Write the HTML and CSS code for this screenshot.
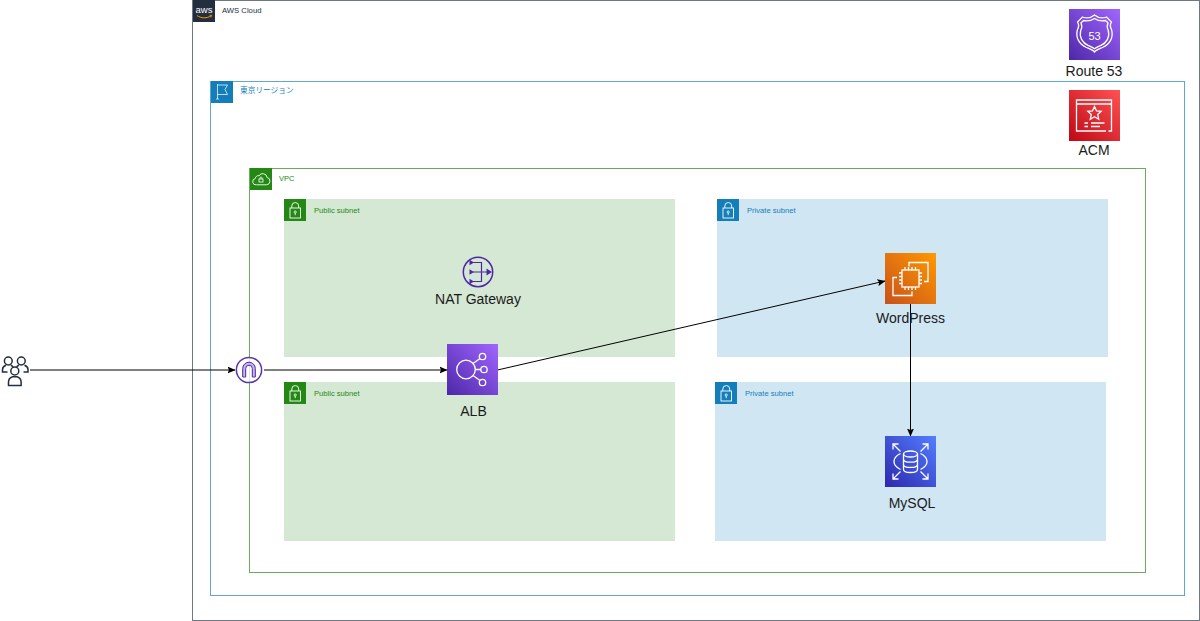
FILE: index.html
```html
<!DOCTYPE html>
<html lang="ja">
<head>
<meta charset="utf-8">
<title>AWS architecture</title>
<link rel="stylesheet" href="styles.css">
</head>
<body>
<main class="canvas">
  <section class="group cloud">
    <div class="badge badge-cloud">
      <svg viewBox="0 0 22 22" class="glyph"><path d="M4 15.6c4.400 2.900 10 2.900 14.200.2" fill="none" stroke="#f90" stroke-width="1"/><path d="M16.500 15.200l2.200.1-.8 2" fill="none" stroke="#f90" stroke-width=".8"/><text x="11" y="13" class="aws-word">aws</text></svg>
    </div>
    <span class="group-label label-cloud">AWS Cloud</span>
  </section>

  <section class="group region">
    <div class="badge badge-region">
      <svg viewBox="0 0 22 22" class="glyph"><path d="M6.500 3v15M5 18h3M6.500 4h10l-2.500 4.500 2.500 5h-10" fill="none" stroke="#fff" stroke-opacity=".8" stroke-width=".9"/></svg>
    </div>
    <span class="group-label label-region">東京リージョン</span>
  </section>

  <section class="group vpc">
    <div class="badge badge-green">
      <svg viewBox="0 0 22 22" class="glyph"><path d="M6.500 16.800h10a3.700 3.700 0 0 0 .6-7.300 4.400 4.400 0 0 0-8.100-1.800 3.100 3.100 0 0 0-3.700 2.800 3.200 3.200 0 0 0 1.200 6.300z" fill="none" stroke="#fff" stroke-width=".9"/><rect x="9" y="11" width="4" height="3" fill="none" stroke="#fff" stroke-width=".8"/><path d="M10 11v-1a1 1 0 0 1 2 0v1" fill="none" stroke="#fff" stroke-width=".7"/></svg>
    </div>
    <span class="group-label label-vpc">VPC</span>
  </section>

  <section class="subnet public pub-a">
    <div class="badge badge-green">
      <svg viewBox="0 0 22 22" class="glyph"><rect x="6" y="9" width="10.500" height="10" fill="none" stroke="#fff" stroke-width=".9"/><path d="M7.800 9V7a3.400 3.400 0 0 1 6.900 0v2" fill="none" stroke="#fff" stroke-width=".9"/><circle cx="11.200" cy="13" r="1.100" fill="none" stroke="#fff" stroke-width=".8"/><path d="M11.200 14v2.200" stroke="#fff" stroke-width=".8"/></svg>
    </div>
    <span class="subnet-label">Public subnet</span>
  </section>

  <section class="subnet public pub-b">
    <div class="badge badge-green">
      <svg viewBox="0 0 22 22" class="glyph"><rect x="6" y="9" width="10.500" height="10" fill="none" stroke="#fff" stroke-width=".9"/><path d="M7.800 9V7a3.400 3.400 0 0 1 6.900 0v2" fill="none" stroke="#fff" stroke-width=".9"/><circle cx="11.200" cy="13" r="1.100" fill="none" stroke="#fff" stroke-width=".8"/><path d="M11.200 14v2.200" stroke="#fff" stroke-width=".8"/></svg>
    </div>
    <span class="subnet-label">Public subnet</span>
  </section>

  <section class="subnet private priv-a">
    <div class="badge badge-blue">
      <svg viewBox="0 0 22 22" class="glyph"><rect x="6" y="9" width="10.500" height="10" fill="none" stroke="#fff" stroke-width=".9"/><path d="M7.800 9V7a3.400 3.400 0 0 1 6.900 0v2" fill="none" stroke="#fff" stroke-width=".9"/><circle cx="11.200" cy="13" r="1.100" fill="none" stroke="#fff" stroke-width=".8"/><path d="M11.200 14v2.200" stroke="#fff" stroke-width=".8"/></svg>
    </div>
    <span class="subnet-label">Private subnet</span>
  </section>

  <section class="subnet private priv-b">
    <div class="badge badge-blue">
      <svg viewBox="0 0 22 22" class="glyph"><rect x="6" y="9" width="10.500" height="10" fill="none" stroke="#fff" stroke-width=".9"/><path d="M7.800 9V7a3.400 3.400 0 0 1 6.900 0v2" fill="none" stroke="#fff" stroke-width=".9"/><circle cx="11.200" cy="13" r="1.100" fill="none" stroke="#fff" stroke-width=".8"/><path d="M11.200 14v2.200" stroke="#fff" stroke-width=".8"/></svg>
    </div>
    <span class="subnet-label">Private subnet</span>
  </section>

  <svg class="wires" viewBox="0 0 1200 621">
    <defs>
      <marker id="head" viewBox="0 0 8 8" refX="7.500" refY="4" markerWidth="8" markerHeight="8" orient="auto" markerUnits="userSpaceOnUse">
        <path d="M0 0.500L8 4 0 7.500 1.500 4z" fill="#000"/>
      </marker>
    </defs>
    <path class="wire" d="M30 370H235" marker-end="url(#head)"/>
    <path class="wire" d="M264 370H447" marker-end="url(#head)"/>
    <path class="wire" d="M497.500 370L885 281" marker-end="url(#head)"/>
    <path class="wire" d="M910.500 304V436" marker-end="url(#head)"/>
  </svg>

  <div class="users">
    <svg viewBox="0 0 28 32" class="glyph"><g fill="none" stroke="#232f3e" stroke-width="1.500"><circle cx="7.300" cy="6" r="3.900"/><circle cx="20.300" cy="6" r="3.900"/><circle cx="13.800" cy="16" r="4"/><path d="M6.500 17H1.500v-2.500c0-2.200 1.800-3.600 3.500-4.200M9.700 10.300c1 .4 1.800 1 2.300 1.700"/><path d="M22.500 17h4.500v-2.500c0-2.200-1.800-3.600-3.500-4.200M18 10.300c-1 .4-1.800 1-2.300 1.700"/><path d="M7.500 30.500v-3.500c0-2.700 2-4.700 4-5.300h4.600c2 .6 4 2.600 4 5.300v3.500z"/></g></svg>
  </div>

  <div class="igw">
    <svg viewBox="0 0 28 28" class="glyph"><circle cx="14" cy="14" r="12.600" fill="#fff" fill-opacity=".75" stroke="#5a35ad" stroke-width="1.500"/><path d="M9.200 20.500V12.500a4.800 4.800 0 0 1 9.600 0v8" fill="none" stroke="#c8b6ea" stroke-width="3"/><path d="M7.700 21V12.500a6.300 6.300 0 0 1 12.600 0V21h-3V12.500a3.300 3.300 0 0 0-6.600 0V21z" fill="none" stroke="#4d27a8" stroke-width="1"/></svg>
  </div>

  <figure class="node n-route53">
    <div class="tile purple">
      <svg viewBox="0 0 51 51" class="glyph"><path d="M25.500 6c3 2.500 8 3.500 12 2l5 5c-1.500 2.500-1.500 5 0 7.500 2.500 8-2 15-9 18-3.500 1.500-6.500 2.500-8 4.500-1.500-2-4.500-3-8-4.500-7-3-11.500-10-9-18 1.500-2.500 1.500-5 0-7.500l5-5c4 1.500 9 .5 12-2z" class="line"/><path d="M25.500 9.500c3 2 7 3 11 2l2.500 2.500c-1 2.300-1 5 .2 7.200 2 6.500-1.700 12.800-7.200 15.200-2.600 1.100-4.900 2-6.500 3.400-1.600-1.400-3.900-2.300-6.500-3.400-5.500-2.400-9.200-8.700-7.200-15.200 1.200-2.200 1.200-4.900.2-7.200l2.500-2.500c4 1 8 0 11-2z" class="line"/><text x="25.500" y="31" class="tile-num">53</text></svg>
    </div>
    <figcaption>Route 53</figcaption>
  </figure>

  <figure class="node n-acm">
    <div class="tile red">
      <svg viewBox="0 0 51 51" class="glyph"><path d="M39.500 41h3V10H7.500v31H37M7.500 14h35" class="line"/><path d="M25.500 16.500l2 4.300 4.700.5-3.500 3.200 1 4.700-4.200-2.400-4.200 2.400 1-4.700-3.500-3.200 4.700-.5z" class="line"/><path d="M15.500 33h3.500M22 33h13.500M15.500 36.500h3.500M22 36.500h9" class="line"/></svg>
    </div>
    <figcaption>ACM</figcaption>
  </figure>

  <figure class="node n-nat">
    <div class="nat-icon">
      <svg viewBox="0 0 32 32" class="glyph"><circle cx="16" cy="16" r="14.700" fill="none" stroke="#4d27a8" stroke-width="1.500"/><path d="M11 6.500h8.500v19H11M11 16h14" fill="none" stroke="#4d27a8" stroke-width="1.200"/><path d="M7.500 3.700l4.500 2.800-4.500 2.800zM7.500 13.200l4.500 2.800-4.500 2.800zM7.500 22.700l4.500 2.800-4.500 2.800zM24.500 12.500l5.500 3.500-5.500 3.500z" fill="#4d27a8"/></svg>
    </div>
    <figcaption>NAT Gateway</figcaption>
  </figure>

  <figure class="node n-alb">
    <div class="tile purple">
      <svg viewBox="0 0 51 51" class="glyph"><circle cx="19" cy="25.500" r="9.300" class="line"/><circle cx="35.500" cy="12.500" r="3.200" class="line"/><circle cx="37" cy="25.500" r="3.200" class="line"/><circle cx="35.500" cy="38.500" r="3.200" class="line"/><path d="M26 19.500l7-5M28.300 25.500h5.500M26 31.500l7 5" class="line"/></svg>
    </div>
    <figcaption>ALB</figcaption>
  </figure>

  <figure class="node n-wp">
    <div class="tile orange">
      <svg viewBox="0 0 51 51" class="glyph"><path d="M24 13.500v-4h19v19h-4M12 24.500H8v18h19v-4" class="line"/><rect x="17" y="17" width="17" height="17" class="line"/><path d="M20 17v-3M23.500 17v-3M27 17v-3M30.500 17v-3M20 37v-3M23.500 37v-3M27 37v-3M30.500 37v-3M14 20h3M14 23.500h3M14 27h3M14 30.500h3M34 20h3M34 23.500h3M34 27h3M34 30.500h3" class="line"/></svg>
    </div>
    <figcaption>WordPress</figcaption>
  </figure>

  <figure class="node n-mysql">
    <div class="tile blue">
      <svg viewBox="0 0 51 51" class="glyph"><ellipse cx="25.500" cy="18" rx="7" ry="3" class="line"/><path d="M18.500 18v15.500c0 1.700 3.100 3 7 3s7-1.300 7-3V18M18.500 23.200c0 1.700 3.100 3 7 3s7-1.300 7-3M18.500 28.400c0 1.700 3.100 3 7 3s7-1.300 7-3" class="line"/><path d="M15.500 17.500c-4 2-6.500 4.800-6.500 8s2.500 6 6.500 8M35.500 17.500c4 2 6.500 4.800 6.500 8s-2.500 6-6.500 8" class="line"/><path d="M8 8l7.500 7.500M8 13.500V8h5.500M43 8l-7.500 7.500M37.500 8H43v5.500M8 43l7.500-7.500M8 37.500V43h5.500M43 43l-7.500-7.500M37.500 43H43v-5.500" class="line"/></svg>
    </div>
    <figcaption>MySQL</figcaption>
  </figure>
</main>
</body>
</html>
```

FILE: styles.css
```css
* { box-sizing: border-box; }

html, body {
  margin: 0;
  padding: 0;
  background: #fff;
}

.canvas {
  position: relative;
  width: 1200px;
  height: 621px;
  overflow: hidden;
  font-family: "Liberation Sans", Arial, "Noto Sans CJK JP", sans-serif;
}

.glyph {
  display: block;
  width: 100%;
  height: 100%;
}

.group {
  position: absolute;
  display: flex;
  align-items: flex-start;
  background: transparent;
}

.cloud  { left: 192px; top: 0;    width: 1008px; height: 621px; border: 1px solid #6f7782; }
.region { left: 210px; top: 81px; width: 975px;  height: 515px; border: 1px solid #5fa8d3; }
.vpc    { left: 249px; top: 168px; width: 897px; height: 405px; border: 1px solid #6cab5f; }

.badge {
  width: 22px;
  height: 22px;
  flex: none;
}

.badge-cloud  { background: #232f3e; margin-top: -1px; }
.badge-region { background: #147eba; margin-top: -1px; }
.badge-green  { background: #248814; }
.badge-blue   { background: #147eba; }

.vpc .badge-green { margin-top: -1px; }

.group-label {
  font-size: 7.700px;
  line-height: 22px;
  margin-left: 7px;
}

.label-cloud  { color: #232f3e; margin-top: -1px; }
.label-region { color: #147eba; margin-top: -2px; }
.label-vpc    { color: #248814; font-size: 7.500px; margin-top: -1px; }

.aws-word {
  fill: #fff;
  font-family: "Liberation Sans", Arial, sans-serif;
  font-size: 9.500px;
  text-anchor: middle;
}

.subnet {
  position: absolute;
  display: flex;
  align-items: flex-start;
  width: 391px;
}

.public  { background: #d5e8d4; }
.private { background: #d0e6f2; }

.pub-a  { left: 284px; top: 199px; height: 158px; }
.pub-b  { left: 284px; top: 382px; height: 159px; }
.priv-a { left: 717px; top: 199px; height: 158px; }
.priv-b { left: 715px; top: 382px; height: 159px; }

.subnet-label {
  font-size: 7.600px;
  line-height: 22px;
  margin: 1px 0 0 8px;
}

.public .subnet-label  { color: #248814; }
.private .subnet-label { color: #147eba; }

.wires {
  position: absolute;
  left: 0;
  top: 0;
  width: 1200px;
  height: 621px;
}

.wire {
  fill: none;
  stroke: #000;
  stroke-width: 1;
}

.users {
  position: absolute;
  left: 1px;
  top: 355px;
  width: 28px;
  height: 32px;
}

.igw {
  position: absolute;
  left: 235px;
  top: 356px;
  width: 28px;
  height: 28px;
}

.node {
  position: absolute;
  margin: 0;
  width: 120px;
  display: flex;
  flex-direction: column;
  align-items: center;
}

.node figcaption {
  font-size: 14px;
  line-height: 16px;
  color: #1a1a1a;
  white-space: nowrap;
}

.tile {
  width: 51px;
  height: 51px;
  flex: none;
}

.line {
  fill: none;
  stroke: #fff;
  stroke-width: 1.300;
}

.tile-num {
  fill: #fff;
  font-family: "Liberation Sans", Arial, sans-serif;
  font-size: 11px;
  text-anchor: middle;
}

.purple { background: linear-gradient(45deg, #4d27a8, #a166ff); }
.red    { background: linear-gradient(45deg, #bd0816, #ff5252); }
.orange { background: linear-gradient(45deg, #c8511b, #ff9900); }
.blue   { background: linear-gradient(45deg, #2e27ad, #527fff); }

.n-route53 { left: 1034px; top: 9px; }
.n-route53 figcaption { margin-top: 3px; }

.n-acm { left: 1034px; top: 90px; }
.n-acm figcaption { margin-top: 1px; }

.n-nat { left: 418px; top: 256px; }
.n-nat .nat-icon { width: 32px; height: 32px; }
.n-nat figcaption { margin-top: 3px; }

.n-alb { left: 412px; top: 344px; }
.n-alb figcaption { margin: 8px 0 0 3px; }

.n-wp { left: 850.500px; top: 253px; }
.n-wp figcaption { margin-top: 6px; }

.n-mysql { left: 852px; top: 436px; }
.n-mysql .tile { margin-left: -3px; }
.n-mysql figcaption { margin-top: 8px; }
```
